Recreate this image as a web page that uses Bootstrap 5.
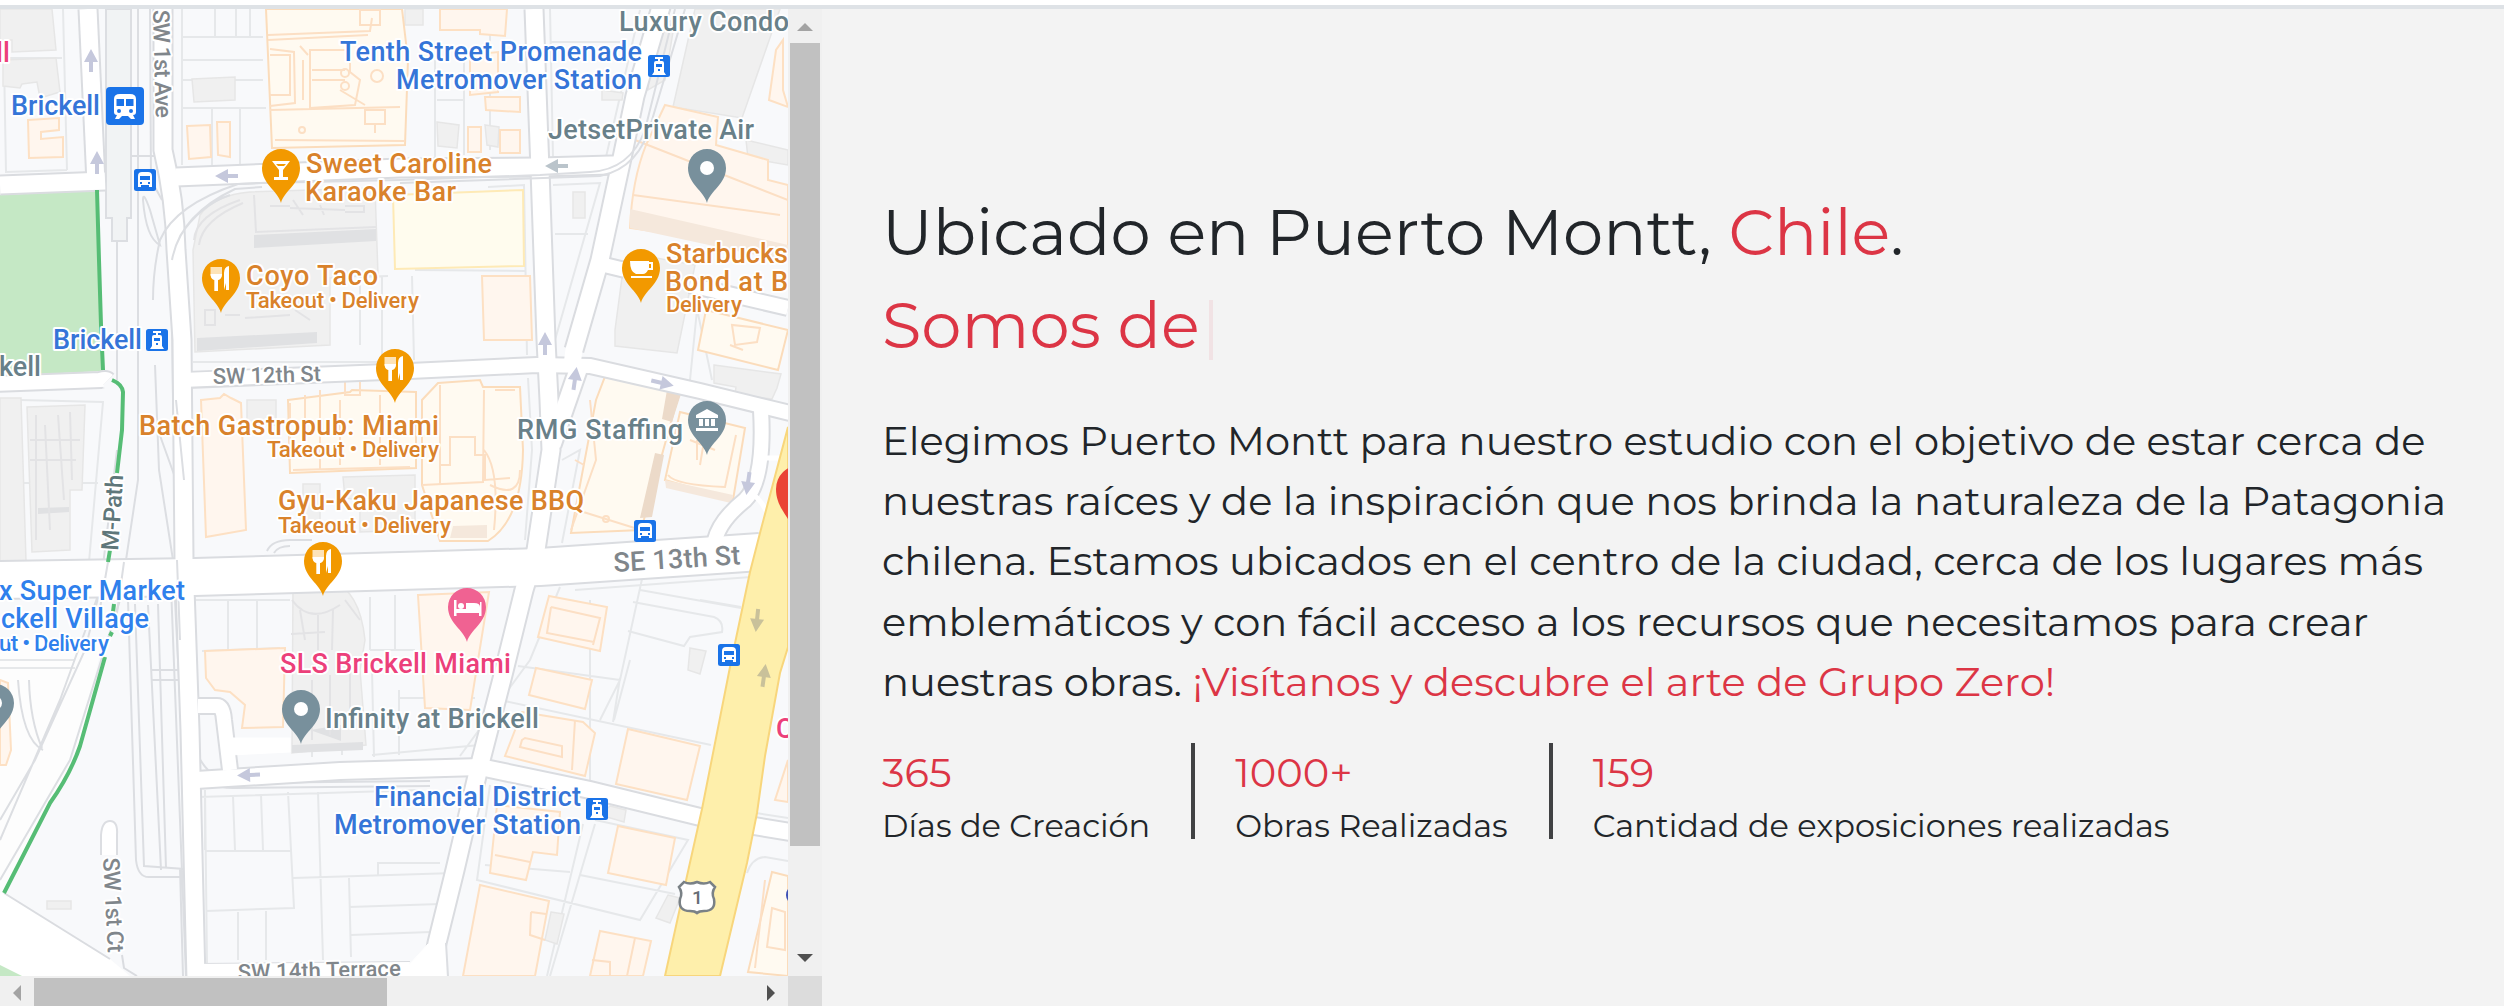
<!DOCTYPE html>
<html lang="es">
<head>
<meta charset="utf-8">
<meta name="viewport" content="width=device-width, initial-scale=1">
<title>Grupo Zero</title>
<link href="https://cdn.jsdelivr.net/npm/bootstrap@5.3.0/dist/css/bootstrap.min.css" rel="stylesheet">
<style>
html,body{height:100%;overflow:hidden}
body{font-family:Montserrat,Inter,"Open Sans",sans-serif;font-weight:400;color:#212529;background:#f3f3f3}
.topline{height:9px;background:#fff;border-bottom:4px solid #dee2e6}
.mapbox{width:822px}
.mapview{width:788px;height:967px}
.vbar{width:34px;background:#f0f0f0}
.hbar{height:30px;background:#f0f0f0}
.vthumb{width:30px;height:803px;background:#c1c1c1}
.hthumb{width:353px;height:28px;background:#c1c1c1}
.vbtn{height:34px}.hbtn{width:34px}
.vbar svg,.hbar svg{display:block}
.corner{width:34px;background:#dcdcdc}
.info{padding:177px 40px 0 60px}
.title{font-size:64px;line-height:93px;font-weight:400;white-space:nowrap}
.caret{display:inline-block;width:4px;height:60px;background:#f1e2e4;margin-left:9px;vertical-align:-12px}
.story{font-size:40px;line-height:60.2px;margin-top:39px;white-space:nowrap}
.figures{margin-top:31px}
.figure-item{height:96px;padding-right:41px;border-right:4px solid #404143;margin-right:40px}
.figure-item:last-child{border:0;margin:0}
.num{font-size:40px;line-height:60px}
.cap{font-size:32px;line-height:48px;white-space:nowrap;margin-top:-1px}
.mapview text{font-family:Roboto,sans-serif;font-weight:500;font-size:27px;paint-order:stroke;stroke:#fff;stroke-width:4px;stroke-linejoin:round}
.mapview .sm{font-size:22.5px}
.mapview .st{font-size:22px;fill:#80868b}
.bl{fill:#3575d8}.br{fill:#2f80ec}.or{fill:#d9822b}.gr{fill:#688089}.pk{fill:#ec407a}
.edge path{fill:none;stroke:#dadce0}.way path{fill:none;stroke:#fff}
.lot{fill:none;stroke:#e6e8ea;stroke-width:2}
.rail{fill:none;stroke:#dcdee2;stroke-width:2}
.bg{fill:#f0f0f0;stroke:#e6e6e6;stroke-width:1.5}
.bp{fill:#fff6ee;stroke:#fde0c3;stroke-width:2}
.by{fill:#fffaf1;stroke:#fbdcbb;stroke-width:2}
.det{fill:none;stroke:#fcdfc4;stroke-width:2}
.shade{fill:#ecdac9}
.trail{fill:none;stroke:#56bd75;stroke-width:4}
</style>
</head>
<body class="d-flex flex-column">
<header class="topline flex-shrink-0"></header>
<main class="d-flex flex-grow-1">
<section class="mapbox flex-shrink-0 d-flex flex-column">
<div class="d-flex">
<svg class="mapview d-block" viewBox="0 9 788 967">
<defs>
<path id="pin" d="M0 35C-3 23-19 16-19 0A19 19 0 0 1 19 0C19 16 3 23 0 35Z"/>
<g id="fork" fill="#fff"><path d="M-10.500-11v7q0 5 4 6v11h3.500v-11q4-1 4-6v-7z" fill="#fde3b8"/><path d="M-10.500-4q0 5 4 6v11h3.500v-11q4-1 4-6zM3 12v-17q0-6 5-7v24h-3v-7z"/></g>
<g id="bus"><rect width="22" height="22" rx="2.500" fill="#1a73e8"/><path d="M4 18V7q0-4 4-4h6q4 0 4 4v11h-3v-2H7v2z" fill="#fff"/><path d="M6 7h10v4H6zM6 13h2v2H6zm8 0h2v2h-2z" fill="#1a73e8"/></g>
<g id="tram"><rect width="22" height="22" rx="2.500" fill="#1a73e8"/><path d="M7 2h8v2h-3v2h2q2 0 2 2v9l2 3H4l2-3V8q0-2 2-2h2V4H7z" fill="#fff"/><path d="M8 9h6v3H8zM10 14h2v2h-2z" fill="#1a73e8"/></g>
<path id="arr" d="M0-12L7 1H2V11H-2V1H-7Z"/>
</defs>
<rect y="9" width="788" height="967" fill="#f8f9fb"/>
<path d="M0 640H103L80 746 50 803 4 893 0 900Z" fill="#fdfdfd"/>
<path d="M0 893H4L110 959 130 976H0Z" fill="#fff"/><path d="M4 893L110 959M122 955L124 968 137 976" fill="none" stroke="#dadce0" stroke-width="2"/>
<path d="M0 965L22 976H0Z" fill="#c5e8c5"/>
<!-- parcels -->
<g class="lot">
<path d="M182 9V165M182 37H263M182 60H263M182 80L263 80M182 108H266M212 108V165M240 108V165M215 9V37M236 9V37M250 9V37M63 9L67 170M0 58H62M4 60L6 172 67 170M490 9V150M435 60V165M464 60V155M437 100H465M550 42H620M550 9L553 157M553 157H606L640 10M553 185L600 183 555 340M555 234H588M488 187L524 185 527 355M415 270L525 271M382 276V360M412 276L414 360M388 276L360 277V345M193 362H390M528 378L532 450 525 540M565 400L573 372M562 460L580 450 562 543M700 280L690 380M693 290L712 380M0 483H98M89 562L103 402 20 400M590 600V820M642 579L620 680 600 720M560 587L530 660 460 756M575 590L751 577M0 660H75M0 668H75M195 600H290M228 600V650M257 600V648M202 651L280 648M370 597V650M395 595V650M370 650H415M372 670L374 757M400 698H475M640 590L741 608M633 602L714 617Q724 621 722 632L690 637 684 646 628 631M630 660L614 720M518 666L620 680M500 700L711 745M620 678L613 722M195 700L199 797L420 790M205 797V850M233 796L235 850M261 795L263 850M288 792L294 908 206 911M205 851H291M318 792L323 960M293 878L455 873M349 878L351 957M349 907L440 904M351 935L430 932M238 912V960M266 911V960M378 875V863H440M207 964L205 790M490 785L477 880 640 920 688 840 595 820M485 865L570 872M580 875L675 894M595 824L550 976M583 824L547 976M750 812L788 818M747 873Q752 858 765 857L788 861M312 680V757M342 690V755M399 690V755M372 755L480 745M700 600L741 607"/>
</g>
<!-- transit tracks -->
<g class="rail">
<path d="M106 9V218H112V241H127V218H131V9Z" fill="#f1f3f4"/>
<path d="M117 241V380M138 9V480L120 600 70 760 0 880M117 450L100 590 60 700 0 840M105 570L85 650 35 760 0 820M150 9L151 180M151 180L162 200M132 156H156L164 180 172 320 173 400 178 560 186 700Q190 778 235 783L430 781M155 365L159 470 173 560 180 700Q183 790 235 788L430 786M158 430L176 480M128 600L136 860Q138 878 150 877H185M135 604L144 866 185 869M148 605L161 870M158 604L166 868M152 680H180M152 670H180M170 560L186 976M180 868L183 976"/>
<path d="M18 680Q22 740 43 750M29 680Q30 720 42 748"/>
<path d="M101 855V835Q102 821 110 821T117 835V855" fill="#fff"/>
</g>
<path d="M0 195L97 191 103 371 0 376Z" fill="#c5e8c5"/>
<!-- grey blocks -->
<g class="bg">
<path d="M0 9H52L56 50 12 52V40H0ZM3 60L56 58 60 92 40 98 37 82 22 84 20 88 3 86ZM192 79L235 77V100L194 102ZM200 215Q215 195 250 192L375 188 378 275 330 278 330 345 195 352 193 250Z"/>
<path d="M0 398H21L26 561H0ZM27 407L85 405 82 490 70 490V550L32 552ZM247 400H276V425H247ZM343 477L415 475V530L360 532V500L345 498ZM303 484H320V520H303ZM293 585L330 580Q360 590 365 640L360 670 366 745 292 753Z"/>
<path d="M695 9L780 9 742 118 673 107ZM437 122L459 125 457 148 438 146ZM485 125L499 127 498 147 487 145ZM573 192H585V218H573ZM746 140L788 150V165L748 158ZM714 365L781 374 777 388 772 399 735 394 736 387 714 383ZM615 330L623 270 640 255 695 265 677 353 615 346ZM690 648L706 651 700 674 688 670ZM610 806L626 810 624 822 600 815ZM668 895L680 898 670 923 656 918ZM551 912L564 914 557 944 545 940ZM47 901H71V909H47ZM602 90L623 93 622 100 602 100ZM405 9H423V25H405ZM652 25L675 20 665 80 648 90Z"/>
</g>
<path d="M254 235L376 229V241L254 248ZM197 338L317 332V343L197 351ZM38 508L69 507V512L38 514ZM292 745L363 742V750L292 753ZM310 730L341 725V741Z" fill="#e0e1e3"/>
<g fill="none" stroke="#e3e3e5" stroke-width="2"><path d="M254 195L256 232 376 227M270 206H290M290 208L345 210M293 200L303 215M320 205L324 215M345 206H364V212H345M194 240Q196 215 240 200M199 245Q202 220 243 203M205 310H215V325H205ZM225 315H240M245 318L290 315M295 310L310 320M36 415V540M45 425L50 530M58 415L64 500M70 412L72 480M30 440H80M30 460H76M292 600Q310 625 340 605M300 610L305 640M318 615V650M333 610L332 650M291 634L325 632M345 600L360 620M312 680V740M330 675V735M350 670V720"/></g>
<!-- buildings -->
<g class="by"><path d="M266 9L402 9 408 60 405 145 272 148Z"/><path d="M393 195L523 190 524 266 395 269Z" fill="#fffcee" stroke="#feeab6"/>
<path d="M288 400L350 392 352 390 416 392V468L290 473ZM438 383L480 380 483 387 520 387 523 450Q522 520 488 541H440L422 485V400ZM606 374L680 390 641 530 571 533 596 400ZM680 412L745 428 733 500 665 480ZM706 310L788 330 778 370 698 350ZM772 872L788 876V976L748 972Z"/></g>
<g class="bp"><path d="M187 126L210 125 211 157 189 159ZM217 122H230V157L218 155ZM28 120L59 118V130L41 132V139L63 137V157L29 158ZM440 9H507L505 36 480 34V30H440ZM470 55L498 52V92L470 95ZM485 97L520 97V112L486 110ZM468 127H481V152H468ZM500 130H520V153H500ZM665 105L718 117 716 145 768 160V180L788 185V254L750 245 630 228Q632 180 646 145ZM783 40V90L788 107 769 100 776 50ZM482 276L530 276 532 340 484 340Z"/>
<path d="M201 400L220 398 224 394 231 398 241 403 246 530 206 537ZM205 651L285 648 283 727 242 728 245 705 230 692 215 690 206 678ZM418 595L489 592 470 710 425 708ZM549 596L607 607 600 651 538 637ZM536 668L592 680 585 709 529 695ZM522 712L583 722 595 733 585 776 505 756ZM628 729L700 746 687 800 616 784ZM618 826L675 838 666 885 608 873ZM497 805L560 812 557 855 533 852 526 880 490 873ZM480 885L549 901 535 976 463 976ZM600 931L651 941 643 976 590 976ZM788 760L775 800 788 802ZM0 680L8 683 11 750 6 765 0 765Z"/></g>
<path class="shade" d="M667 390L681 394 672 422 662 419ZM655 453L664 455 652 517 640 518Z"/><path d="M630 209V228L788 262V245ZM665 480L733 495 731 503 666 488ZM453 526L487 525V538H450Z" fill="#f5e8dc"/>
<g class="det"><path d="M268 35L370 31 372 18M268 40L368 35M270 49L294 52 295 103 270 106M270 55H290V95H270M310 50L350 50V72L360 80 355 105 310 108ZM303 60V100M312 70H345M312 80H345M360 10H380V25H360ZM365 110H385V124H365ZM375 124V133M270 110L400 107M275 140L405 141M300 46L308 55M340 90L365 105M290 403V460M305 395V430M320 390V470M345 380H360V395H345ZM380 395V465M340 400V465M293 470L410 467M440 385V485M422 485L483 482 484 390M450 450V437H475V455H485V480L510 478M450 450V465H440M495 390H515M490 485Q520 500 520 470M484 450Q500 470 494 530M590 400L596 460 571 530M575 460L584 465M577 510L641 530M668 475Q675 485 725 487L736 435M690 440L715 450M697 440V460M705 435L700 465M551 607L600 618 593 645M551 607L547 633 594 642M522 740L525 738 562 746V757L520 747ZM575 720L572 770M635 140L788 200M633 195L780 215M495 855L530 862M531 912L546 914M531 912L530 935 545 940M635 938L627 976M592 960L610 962V976M765 880L755 968M772 908L785 912V950L767 947ZM732 325L735 345 757 342 760 328ZM730 345L743 350"/><circle cx="302" cy="130" r="3"/><circle cx="377" cy="76" r="6"/><circle cx="345" cy="73" r="4"/><circle cx="345" cy="86" r="4"/><circle cx="606" cy="519" r="3"/></g>
<!-- roads: edges first, then surfaces -->
<g class="edge">
<g stroke-width="21"><path d="M163 9L163 150Q175 200 176 250L182 340 184 560 190 730 196 980"/><path d="M88 9L96 183"/><path d="M0 185L105 181"/><path d="M176 177L400 168 540 167 610 165 618 167"/><path d="M663 0L635 96 622 158 600 260 574 350"/><path d="M534 9L540 170 546 340 549 400 551 450 536 550 524 590 503 675 482 756 477 776 455 870 437 943 430 980"/><path d="M578 370L552 445"/></g>
<g stroke-width="18"><path d="M-5 384L100 380Q106 378 108 380M188 380L410 371 537 365 590 366 700 391 790 413"/><path d="M592 262L625 270M690 285L788 308"/><path d="M761 410Q765 480 745 500Q720 520 715 540"/><path d="M198 706H217Q223 706 224 720L230 770"/></g>
<path d="M196 780L340 771 480 767 590 790 700 817 790 832" stroke-width="20"/>
<path d="M-5 580L195 577 400 571 540 567 760 552" stroke-width="40"/>
<path d="M200 972L410 970" stroke-width="18"/>
</g>
<g class="way">
<g stroke-width="17"><path d="M163 9L163 150Q175 200 176 250L182 340 184 560 190 730 196 980"/><path d="M88 9L96 183"/><path d="M0 185L105 181"/><path d="M176 177L400 168 540 167 610 165 620 165"/><path d="M663 0L635 96 622 158 600 260 574 350 572 365"/><path d="M534 9L540 170 546 340 549 400 551 450 536 550 524 590 503 675 482 756 477 776 455 870 437 943 430 980"/><path d="M578 370L552 445"/></g>
<g stroke-width="14"><path d="M-5 384L100 380Q106 378 108 380M182 380L410 371 537 365 590 366 700 391 790 413"/><path d="M592 262L625 270M690 285L788 308"/><path d="M761 410Q765 480 745 500Q720 520 715 540"/><path d="M198 706H217Q223 706 224 720L230 770"/></g>
<path d="M196 780L340 771 480 767 590 790 700 817 790 832" stroke-width="16"/>
<path d="M-5 580L195 577 400 571 540 567 760 552" stroke-width="36"/>
<path d="M190 973L410 971" stroke-width="18"/><path d="M230 738L290 738V752L230 755Z" style="fill:#fff"/><path d="M758 458H785M750 492Q762 500 768 515" stroke-width="5"/>
<path d="M428 944L446 946V980H408V966Z" style="fill:#fff"/>
</g>
<path class="rail" d="M446 943L448 976M176 400L184 480M262 183L400 180 540 175 590 172Q630 170 645 130L675 9M400 183L600 176Q640 168 652 120L685 9M267 551Q272 540 290 540H312M274 553Q278 546 290 546M108 562L98 620M124 562L116 620M177 560L180 640"/>
<path class="rail" d="M262 183L238 184Q175 205 160 240Q153 270 153 300M262 187L235 189Q180 215 172 260M230 195Q200 205 180 236M143 200Q146 238 160 245L150 210Q143 190 143 200"/>
<path d="M788 427L760 533 750 572 730 667 702 809 687 876 665 976H720L747 863 757 813 765 756 780 673 788 647Z" fill="#feefab" stroke="#f8d67c" stroke-width="2"/>
<path class="trail" d="M97 190L99 260 101 325 103 370M112 380Q122 384 123 392L122 430 117 473M110 550L108 562M114 604L113 612M112 632L110 636M105 657L80 746Q70 775 50 803L4 893"/>
<g fill="#c5c8dc"><use href="#arr" x="91" y="61"/><use href="#arr" x="97" y="163"/><use href="#arr" x="545" y="344"/><use href="#arr" transform="translate(575 379) rotate(8)"/><use href="#arr" transform="translate(662 383) rotate(103)"/><use href="#arr" transform="translate(748 483) rotate(188)"/><use href="#arr" transform="translate(227 176) rotate(-90)"/><use href="#arr" transform="translate(557 166) rotate(-90)" fill="#bac4cb"/><use href="#arr" transform="translate(249 775) rotate(-92)"/></g>
<g fill="#c9c19a"><use href="#arr" transform="translate(757 620) rotate(186)"/><use href="#arr" transform="translate(764 676) rotate(8)"/></g>
<!-- street names -->
<text class="st" transform="translate(153 10) rotate(88.500)" textLength="108" style="font-size:23px">SW 1st Ave</text>
<text class="st" x="213" y="384" transform="rotate(-1.500 213 384)" textLength="108">SW 12th St</text>
<text class="st" transform="translate(614 572) rotate(-3.500)" textLength="127" style="font-size:27px">SE 13th St</text>
<text class="st" transform="translate(103 858) rotate(87)" textLength="95" style="font-size:23px">SW 1st Ct</text>
<text class="st" transform="translate(238 980) rotate(-1.500)" textLength="163">SW 14th Terrace</text>
<text class="st" transform="translate(118 551) rotate(-86)" textLength="76" style="font-size:24px;fill:#5f777a">M-Path</text>
<!-- places -->
<g class="bl"><text x="11" y="115" textLength="89">Brickell</text><text x="340" y="61" textLength="302">Tenth Street Promenade</text><text x="396" y="89" textLength="246">Metromover Station</text><text x="53" y="349" textLength="89">Brickell</text><text x="374" y="806" textLength="207">Financial District</text><text x="334" y="834" textLength="247">Metromover Station</text></g>
<g class="br"><text x="-1" y="600" textLength="186">x Super Market</text><text x="1" y="628" textLength="148">ckell Village</text><text class="sm" x="-1" y="651" textLength="110">ut • Delivery</text></g>
<g class="or"><text x="306" y="173" textLength="186">Sweet Caroline</text><text x="305" y="201" textLength="151">Karaoke Bar</text><text x="246" y="285" textLength="132">Coyo Taco</text><text class="sm" x="246" y="308" textLength="173">Takeout • Delivery</text><text x="666" y="263" textLength="122">Starbucks</text><text x="665" y="291" textLength="123">Bond at B</text><text class="sm" x="666" y="312" textLength="76">Delivery</text><text x="139" y="435" textLength="300">Batch Gastropub: Miami</text><text class="sm" x="267" y="457" textLength="172">Takeout • Delivery</text><text x="278" y="510" textLength="306">Gyu-Kaku Japanese BBQ</text><text class="sm" x="278" y="533" textLength="173">Takeout • Delivery</text></g>
<g class="gr"><text x="619" y="31" textLength="170">Luxury Condo</text><text x="548" y="139" textLength="206">JetsetPrivate Air</text><text x="517" y="439" textLength="166">RMG Staffing</text><text x="325" y="728" textLength="214">Infinity at Brickell</text><text x="-1" y="376" textLength="42">kell</text></g>
<g class="pk"><text x="280" y="673" textLength="231">SLS Brickell Miami</text><text x="-4" y="62">ll</text><text x="776" y="738">C</text></g>
<!-- markers -->
<g fill="#f29900"><use href="#pin" x="281" y="168"/><use href="#pin" x="221" y="278"/><use href="#pin" x="641" y="268"/><use href="#pin" x="395" y="368"/><use href="#pin" x="323" y="561"/></g>
<g fill="#78909c"><use href="#pin" x="707" y="168"/><use href="#pin" x="707" y="420"/><use href="#pin" x="301" y="709"/><use href="#pin" x="-5" y="703"/></g>
<use href="#pin" x="467" y="607" fill="#f06292"/>
<g fill="#fff"><circle cx="707" cy="168" r="7"/><circle cx="301" cy="709" r="7"/><circle cx="-5" cy="703" r="7"/></g>
<use href="#fork" x="221" y="278"/><use href="#fork" x="395" y="368"/><use href="#fork" x="323" y="561"/>
<path d="M272 161H290L283 170V177H288V180H274V177H279V170Z" fill="#fff"/><path d="M276 164H286L284 166H278Z" fill="#f29900"/>
<path d="M630 261H649V262H653V270H648Q646 274 643 274H636Q630 272 630 261ZM649 264V268H651V264ZM631 276H652V278H631Z" fill="#fff"/>
<path d="M707 409L718 415V418H696V415ZM699 419H703V426H699ZM705 419H709V426H705ZM711 419H715V426H711ZM696 428H718V431H696Z" fill="#fff"/>
<path d="M454 600H456.500V609H466V603H474Q480 603 480 607V602H481.500V616H479V613H456.500V616H454Z" fill="#fff"/><circle cx="461" cy="606" r="3" fill="#fff"/>
<path d="M800 548C796 520 776 512 776 489A24 24 0 0 1 824 489Z" fill="#ea4335"/>
<rect x="106" y="87" width="38" height="38" rx="4" fill="#1a73e8"/><path d="M114 114V99Q114 94 120 94H130Q136 94 136 99V112Q136 115 133 115L135 119H131L128 116H122L119 119H115L117 115Q114 115 114 112Z" fill="#fff"/><path d="M116.500 99H124V106H116.500ZM126 99H133.500V106H126Z" fill="#1a73e8"/><circle cx="119" cy="111" r="2" fill="#1a73e8"/><circle cx="131" cy="111" r="2" fill="#1a73e8"/>
<use href="#bus" x="134" y="169"/><use href="#bus" x="634" y="520"/><use href="#bus" x="718" y="644"/>
<use href="#tram" x="146" y="329"/><use href="#tram" x="648" y="55"/><use href="#tram" x="586" y="798"/>
<path d="M684 882Q690 885 697 882Q704 885 710 882L715 887Q711 893 714 899Q716 911 704 911Q699 911 697 913Q695 911 690 911Q678 911 680 899Q683 893 679 887Z" fill="#fff" stroke="#7a8186" stroke-width="2.500"/>
<text x="692" y="904" style="font-size:19px;fill:#666d73;stroke:none;font-weight:500">1</text>
<circle cx="796" cy="895" r="10" fill="#3f51b5"/>
</svg>
<div class="vbar d-flex flex-column align-items-center">
<div class="vbtn"><svg width="16" height="34"><path d="M0 22L8 14 16 22Z" fill="#a3a3a3"/></svg></div>
<div class="vthumb"></div>
<div class="vbtn mt-auto"><svg width="16" height="34"><path d="M0 12L8 20 16 12Z" fill="#505050"/></svg></div>
</div>
</div>
<div class="hbar d-flex">
<div class="hbtn"><svg width="34" height="30"><path d="M21 9V25L13 17Z" fill="#a3a3a3"/></svg></div>
<div class="hthumb align-self-end"></div>
<div class="hbtn ms-auto"><svg width="34" height="30"><path d="M13 9V25L21 17Z" fill="#505050"/></svg></div>
<div class="corner"></div>
</div>
</section>
<section class="info flex-grow-1">
<h1 class="title mb-0">Ubicado en Puerto Montt, <span class="text-danger">Chile</span>.<br><span class="text-danger">Somos de</span><span class="caret"></span></h1>
<p class="story mb-0">Elegimos Puerto Montt para nuestro estudio con el objetivo de estar cerca de<br>nuestras raíces y de la inspiración que nos brinda la naturaleza de la Patagonia<br>chilena. Estamos ubicados en el centro de la ciudad, cerca de los lugares más<br>emblemáticos y con fácil acceso a los recursos que necesitamos para crear<br>nuestras obras. <span class="text-danger">¡Visítanos y descubre el arte de Grupo Zero!</span></p>
<div class="figures d-flex">
<div class="figure-item"><div class="num text-danger">365</div><div class="cap">Días de Creación</div></div>
<div class="figure-item"><div class="num text-danger">1000+</div><div class="cap">Obras Realizadas</div></div>
<div class="figure-item"><div class="num text-danger">159</div><div class="cap">Cantidad de exposiciones realizadas</div></div>
</div>
</section>
</main>
<script src="https://cdn.jsdelivr.net/npm/bootstrap@5.3.0/dist/js/bootstrap.bundle.min.js"></script>
</body>
</html>
